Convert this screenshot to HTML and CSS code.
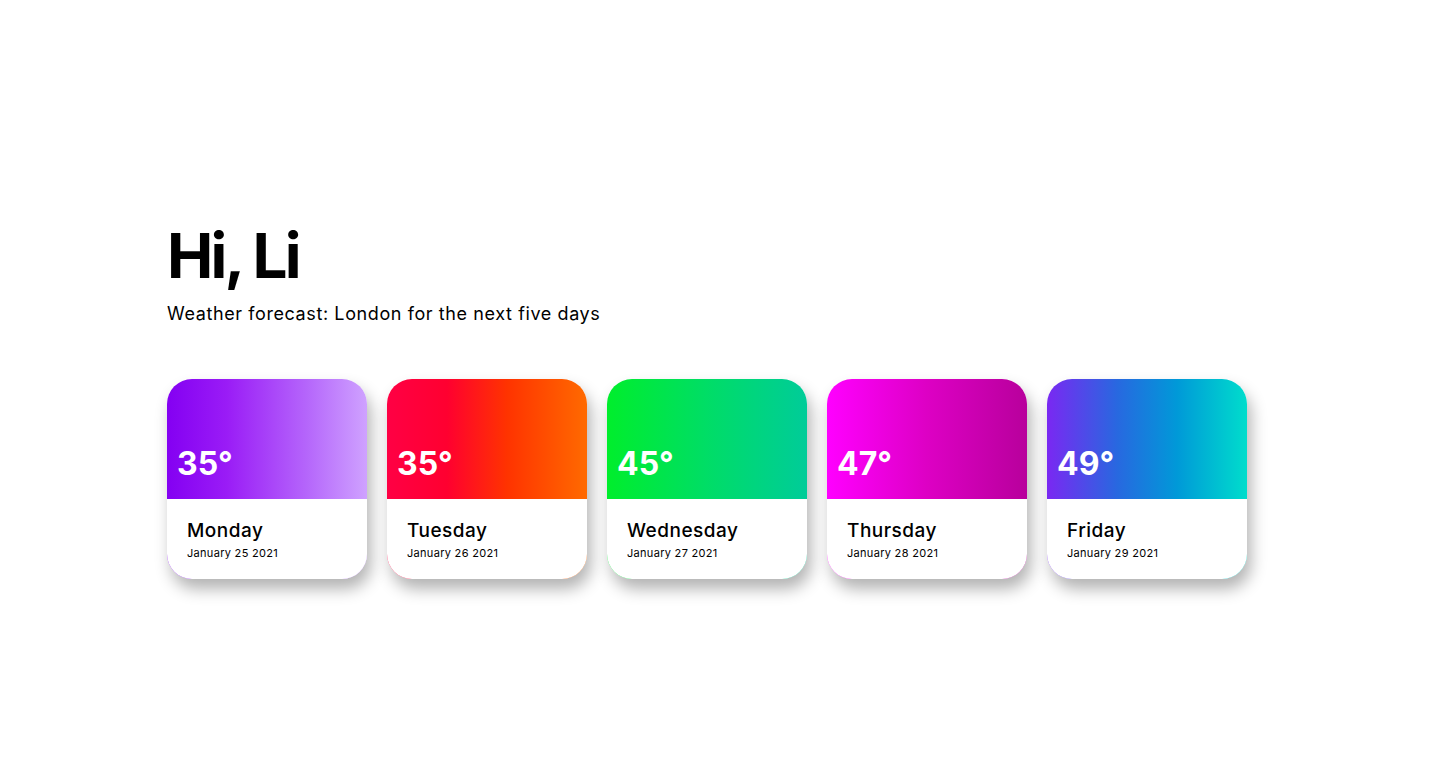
FILE: index.html
```html
<!DOCTYPE html>
<html lang="en">
<head>
<meta charset="utf-8">
<title>Weather forecast</title>
<link rel="stylesheet" href="styles.css">
</head>
<body>
<main class="page">
  <h1 class="greeting">Hi, Li</h1>
  <p class="subtitle">Weather forecast: London for the next five days</p>
  <section class="cards">
    <article class="card grad-mon">
      <div class="card-top"><span class="temp">35°</span></div>
      <div class="card-body"><h2 class="day">Monday</h2><p class="date">January 25 2021</p></div>
    </article>
    <article class="card grad-tue">
      <div class="card-top"><span class="temp">35°</span></div>
      <div class="card-body"><h2 class="day">Tuesday</h2><p class="date">January 26 2021</p></div>
    </article>
    <article class="card grad-wed">
      <div class="card-top"><span class="temp">45°</span></div>
      <div class="card-body"><h2 class="day">Wednesday</h2><p class="date">January 27 2021</p></div>
    </article>
    <article class="card grad-thu">
      <div class="card-top"><span class="temp">47°</span></div>
      <div class="card-body"><h2 class="day">Thursday</h2><p class="date">January 28 2021</p></div>
    </article>
    <article class="card grad-fri">
      <div class="card-top"><span class="temp">49°</span></div>
      <div class="card-body"><h2 class="day">Friday</h2><p class="date">January 29 2021</p></div>
    </article>
  </section>
</main>
</body>
</html>
```
FILE: styles.css
```css
* { box-sizing: border-box; }
html, body { margin: 0; padding: 0; background: #fff; }
body {
  font-family: "Inter", "Open Sans", sans-serif;
  color: #000;
}
.page {
  min-height: 100vh;
  padding: 218px 0 0 167px;
}
.greeting {
  margin: 0;
  font-size: 62px;
  font-weight: 700;
  line-height: 76px;
  letter-spacing: -2.8px;
}
.subtitle {
  margin: 6px 0 0;
  font-size: 18px;
  line-height: 27px;
  letter-spacing: 0.6px;
}
.cards {
  display: flex;
  gap: 20px;
  margin-top: 52px;
}
.card {
  width: 200px;
  height: 200px;
  border-radius: 25px;
  overflow: hidden;
  box-shadow: 4px 10px 16px rgba(0, 0, 0, 0.3);
  display: flex;
  flex-direction: column;
}
.card-top {
  height: 120px;
  display: flex;
  align-items: flex-end;
  padding: 0 0 16px 10px;
}
.temp {
  color: #fff;
  font-size: 32px;
  font-weight: 700;
  line-height: 38px;
}
.card-body {
  flex: 1;
  background: #fff;
  padding: 19px 20px 0;
}
.day {
  margin: 0;
  font-size: 19px;
  font-weight: 500;
  line-height: 26px;
  letter-spacing: 0.5px;
}
.date {
  margin: 1px 0 0;
  font-size: 11px;
  line-height: 16px;
  letter-spacing: 0.3px;
}
.grad-mon { background: linear-gradient(to right, #8400f2 0%, #9a1cf6 30%, #b566fb 70%, #cfa2ff 100%); }
.grad-tue { background: linear-gradient(to right, #ff0044 0%, #ff0030 30%, #ff3300 60%, #ff6a00 100%); }
.grad-wed { background: linear-gradient(to right, #00ee2c 0%, #00dd66 50%, #00cc99 100%); }
.grad-thu { background: linear-gradient(to right, #ff00ff 0%, #dd00c4 50%, #b8009c 100%); }
.grad-fri { background: linear-gradient(to right, #7a28f2 0%, #2868e0 35%, #0099d8 65%, #00ddcc 100%); }
```
